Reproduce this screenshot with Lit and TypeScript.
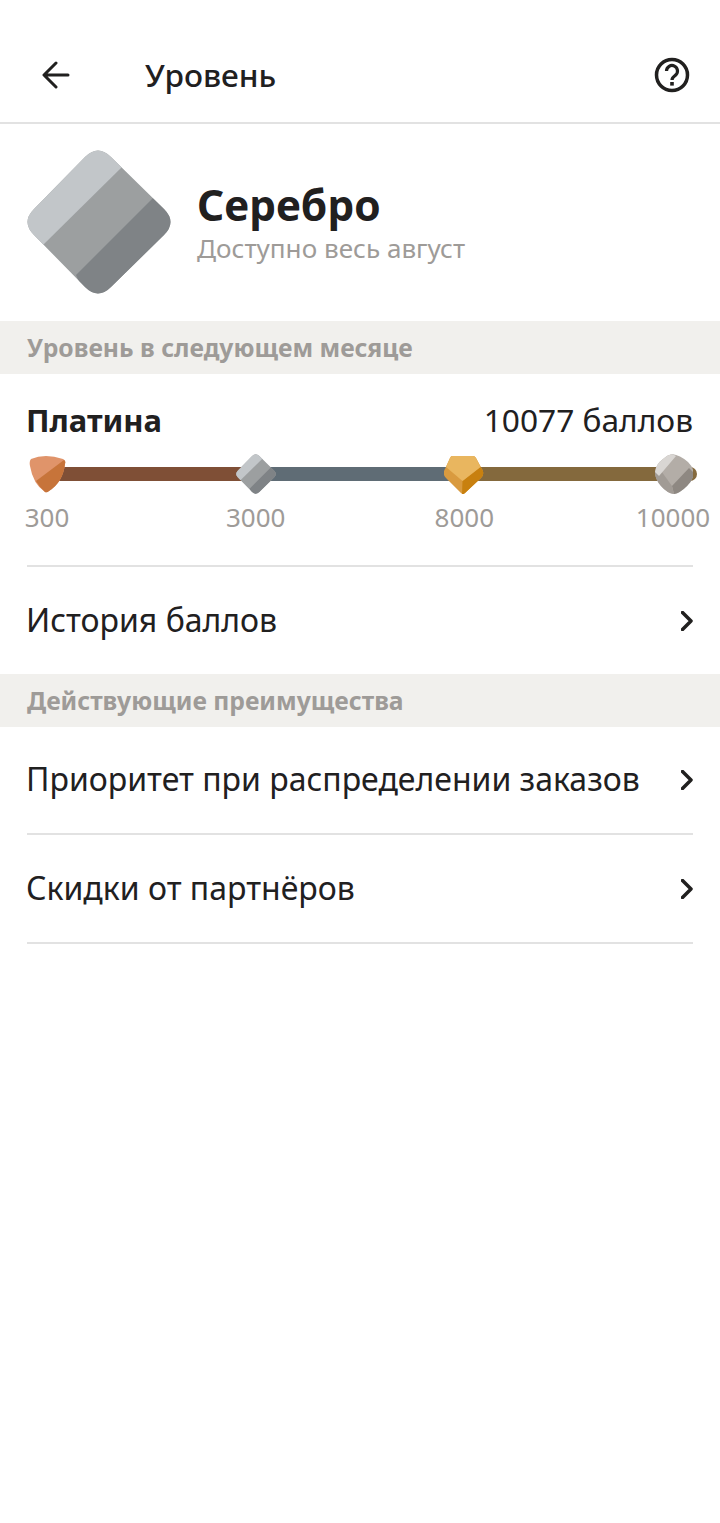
import { LitElement, html, css, svg } from "lit";
import { customElement, property } from "lit/decorators.js";

const diamond = html`<svg class="gem" viewBox="0 0 144 144">
  <defs><clipPath id="dm"><path d="M58 7Q71 -6 84 7L137 59Q150 72 137 85L84 137Q71 150 58 137L7 85Q-6 72 7 59Z" /></clipPath></defs>
  <g clip-path="url(#dm)">
    <rect width="144" height="144" fill="#9c9fa0" />
    ${svg`<path d="M-10 -10H115L95 17L17 94L-10 110Z" fill="#c2c6c9" />`}
    ${svg`<path d="M126 48L49 125L60 150H150V70Z" fill="#7f8386" />`}
  </g>
</svg>`;

const bronze = html`<svg class="gem" viewBox="0 0 40 40">
  <path d="M4 5Q18 -1 36 5Q39 6 38 10Q36 28 22 37Q20 39 18 38Q6 30 3 12Q2 7 4 5Z" fill="#e0946a" />
  <path d="M37 6Q39 7 38 10Q36 28 22 37Q20 39 18 38Q13 34 9 27Z" fill="#c7743a" />
</svg>`;

const gold = html`<svg class="gem" viewBox="0 0 40 40">
  <path d="M8 2H29Q31 2 32 4L38 15Q41 20 37 24L21 39Q19 41 17 39L2 24Q-2 20 1 15L6 4Q7 2 8 2Z" fill="#d99a3f" />
  <path d="M18.5 27L36.5 13L38 15Q41 20 37 24L21 39Q19 41 18 40Z" fill="#c8800f" />
  <path d="M8 2H29Q31 2 32 4L36.5 13L18.5 27L2 13L6 4Q7 2 8 2Z" fill="#e9b65f" />
</svg>`;

const platinum = html`<svg class="gem" viewBox="0 0 40 40">
  <path d="M19 0Q27 1 35 8Q40 13 41 19Q40 26 34 32Q27 39 21 40Q14 39 8 32Q2 25 2 18Q3 10 10 5Q14 1 19 0Z" fill="#b3ada7" />
  <path d="M21 40Q27 39 34 32Q40 26 41 19L36 14L19 32Z" fill="#8e8882" />
  <path d="M2 18Q2 25 8 32Q14 39 21 40L19 32L6 14Z" fill="#a19b95" />
  <path d="M19 0Q14 1 10 5Q3 10 2 18L6 22L23 2Z" fill="#d9d6d3" />
</svg>`;

const chevron = html`<svg class="chev" viewBox="0 0 12 20"><path d="M1.5 1.5L10 10L1.5 18.5" /></svg>`;

@customElement("app-row")
export class AppRow extends LitElement {
  static styles = css`
    :host {
      display: block;
      padding: 0 27px;
    }
    .row {
      height: 108px;
      box-sizing: border-box;
      display: flex;
      align-items: center;
      justify-content: space-between;
      font-size: 32px;
      color: #21201f;
      border-bottom: 2px solid #e2e2e2;
    }
    :host(.tall) .row {
      height: 109px;
    }
    .row.flat {
      height: 107px;
      border-bottom: 0;
    }
    .row span {
      margin: 0 0 3px -1px;
    }
    .chev {
      width: 12px;
      height: 20px;
      fill: none;
      stroke: #21201f;
      stroke-width: 3.5;
      stroke-linecap: round;
      stroke-linejoin: round;
    }
  `;

  @property() label = "";
  @property({ type: Boolean }) flat = false;

  render() {
    return html`<div class="row ${this.flat ? "flat" : ""}">
      <span>${this.label}</span>${chevron}
    </div>`;
  }
}

@customElement("app-root")
export class AppRoot extends LitElement {
  static styles = css`
    :host {
      display: block;
      min-height: 1523px;
      background: #fff;
      font-family: "Noto Sans", sans-serif;
      color: #21201f;
    }
    header {
      box-sizing: border-box;
      padding: 48px 30px 0 42px;
      display: flex;
      align-items: flex-start;
      border-bottom: 2px solid #e2e2e2;
      height: 124px;
    }
    header h1 {
      margin: 0 0 0 75px;
      flex: 1;
      font-size: 31.6px;
      font-weight: 500;
      line-height: 54px;
    }
    .back {
      width: 28px;
      height: 54px;
      fill: none;
      stroke: #21201f;
      stroke-width: 3;
      stroke-linecap: round;
      stroke-linejoin: round;
    }
    .help {
      width: 36px;
      height: 54px;
    }
    .hero {
      height: 197px;
      box-sizing: border-box;
      padding: 26px 27px 0;
      display: flex;
      gap: 26px;
    }
    .hero .gem {
      width: 144px;
      height: 144px;
    }
    .hero h2 {
      margin: 26px 0 0;
      font-size: 42.4px;
      line-height: 58px;
      font-weight: 700;
    }
    .hero p {
      margin: -2px 0 0;
      font-size: 26.1px;
      line-height: 32px;
      color: #9e9b98;
    }
    .band {
      height: 53px;
      padding-left: 27px;
      display: flex;
      align-items: center;
      background: #f1f0ed;
      color: #9e9b98;
      font-size: 24.7px;
      font-weight: 700;
    }
    .level {
      padding: 0 27px;
      height: 193px;
      box-sizing: border-box;
    }
    .level-head {
      height: 80px;
      padding-bottom: 9px;
      padding-top: 20px;
      box-sizing: border-box;
      display: flex;
      justify-content: space-between;
      align-items: center;
      font-size: 31.7px;
    }
    .level-head b {
      margin-left: -1px;
      font-size: 30.9px;
      font-weight: 700;
    }
    .scale {
      position: relative;
      display: flex;
      justify-content: space-between;
      height: 113px;
      box-sizing: border-box;
      border-bottom: 2px solid #e2e2e2;
    }
    .track {
      position: absolute;
      top: 13px;
      left: 30px;
      right: -4px;
      height: 14px;
      border-radius: 0 7px 7px 0;
      overflow: hidden;
      display: flex;
    }
    .track i {
      display: block;
    }
    .stop {
      position: relative;
      width: 40px;
      display: flex;
      flex-direction: column;
      align-items: center;
    }
    .stop .gem {
      width: 40px;
      height: 40px;
      flex: none;
    }
    .stop span {
      margin-top: 5px;
      font-size: 26px;
      line-height: 36px;
      color: #9e9b98;
    }
  `;

  render() {
    return html`
      <header>
        <svg class="back" viewBox="0 0 28 54"><path d="M26 27H3M14 15L2 27L14 39" /></svg>
        <h1>Уровень</h1>
        <svg class="help" viewBox="0 0 36 54">
          <circle cx="18" cy="27" r="15.5" fill="none" stroke="#21201f" stroke-width="3.5" />
          <path d="M12.5 23a5.5 5.5 0 1 1 8.8 4.4c-2 1.5-3.3 2.4-3.3 4.6" fill="none" stroke="#21201f" stroke-width="3.2" />
          <rect x="16.2" y="34" width="3.6" height="3.6" fill="#21201f" />
        </svg>
      </header>
      <section class="hero">
        ${diamond}
        <div>
          <h2>Серебро</h2>
          <p>Доступно весь август</p>
        </div>
      </section>
      <div class="band">Уровень в следующем месяце</div>
      <section class="level">
        <div class="level-head">
          <b>Платина</b>
          <span>10077 баллов</span>
        </div>
        <div class="scale">
          <div class="track">
            <i style="width:188px;background:#7f4f36"></i>
            <i style="width:210px;background:#5f6c75"></i>
            <i style="flex:1;background:#84693d"></i>
          </div>
          <div class="stop">${bronze}<span>300</span></div>
          <div class="stop">${diamond}<span>3000</span></div>
          <div class="stop">${gold}<span>8000</span></div>
          <div class="stop">${platinum}<span>10000</span></div>
        </div>
      </section>
      <app-row flat label="История баллов"></app-row>
      <div class="band">Действующие преимущества</div>
      <app-row label="Приоритет при распределении заказов"></app-row>
      <app-row class="tall" label="Скидки от партнёров"></app-row>
    `;
  }
}
